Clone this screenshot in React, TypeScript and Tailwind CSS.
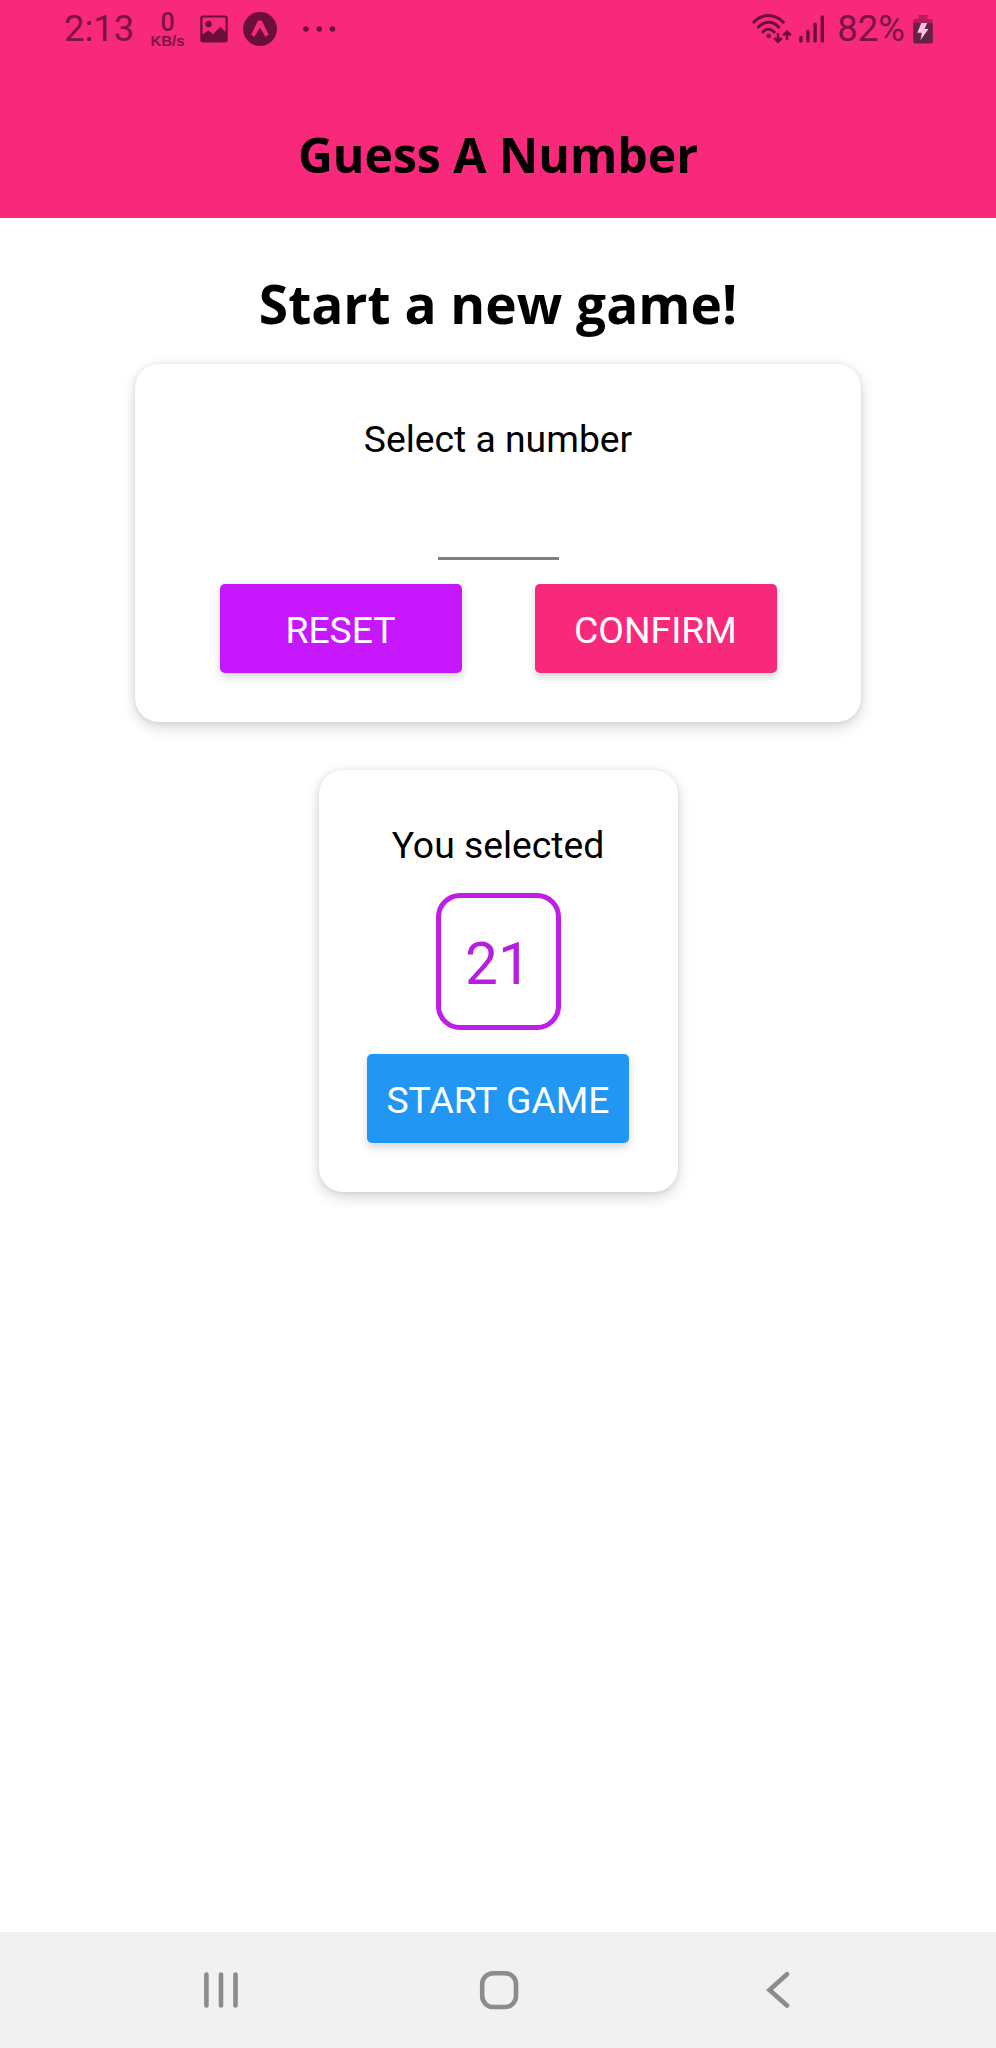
import type { ReactNode } from "react";

function ImageIcon() {
  return (
    <svg width="28" height="28" viewBox="0 0 28 28" className="ml-[16px]">
      <path
        fillRule="evenodd"
        fill="#6b0f38"
        d="M3 0.5H25a2.7 2.7 0 0 1 2.7 2.7V24.8a2.7 2.7 0 0 1-2.7 2.7H3a2.7 2.7 0 0 1-2.7-2.7V3.2A2.7 2.7 0 0 1 3 0.5ZM2.5 3V19.6L8.4 15.2L13 19.2L20.2 11.7L25.5 17V3a0.6 0.6 0 0 0-0.6-0.6H3.1A0.6 0.6 0 0 0 2.5 3Z"
      />
      <circle cx="8.5" cy="9" r="3.2" fill="#6b0f38" />
    </svg>
  );
}

function ExpoIcon() {
  return (
    <svg width="34" height="34" viewBox="0 0 34 34" className="ml-[15px]">
      <circle cx="17" cy="17" r="17" fill="#6b0f38" />
      <path
        fill="#f8287b"
        d="M15 8.500H18.800L25.600 22.600L22.500 25L17 15.500L11.200 25L8.200 22.600Z"
      />
    </svg>
  );
}

function MoreIcon() {
  return (
    <svg width="34" height="8" viewBox="0 0 34 8" className="ml-[25px]">
      <g fill="#6b0f38">
        <circle cx="4" cy="4" r="2.8" />
        <circle cx="17.3" cy="4" r="2.8" />
        <circle cx="30.4" cy="4" r="2.8" />
      </g>
    </svg>
  );
}

function WifiIcon() {
  return (
    <svg width="40" height="30" viewBox="0 0 40 30">
      <g fill="none" stroke="#6b0f38" strokeWidth="2.9" strokeLinecap="round">
        <path d="M1.800 8.200C10.500-0.800 22.500-0.800 31.300 8.200" />
        <path d="M6.300 13.200C12.600 6.600 20.600 6.600 26.800 13.200" />
        <path d="M10.900 18C14.600 14.200 18.400 14.200 22.200 18" />
      </g>
      <circle cx="16.7" cy="22" r="2.3" fill="#6b0f38" />
      <g fill="none" stroke="#6b0f38" strokeWidth="2.5">
        <path d="M26 19V27.500M22.300 24L26 27.700L29.700 24" />
        <path d="M35 26V17.500M31.300 21.300L35 17.600L38.700 21.300" />
      </g>
    </svg>
  );
}

function SignalIcon() {
  return (
    <svg width="26" height="28" viewBox="0 0 26 28" className="ml-[7px]">
      <path
        d="M1.900 22.500V26M8.900 16.200V26M16.100 9.200V26M23.300 2V26"
        fill="none"
        stroke="#6b0f38"
        strokeWidth="3.4"
        strokeLinecap="round"
      />
    </svg>
  );
}

function BatteryIcon() {
  return (
    <svg width="20" height="30" viewBox="0 0 20 30" className="ml-[8px]">
      <path fill="#b71b5b" d="M5.5 1H14.5V5H18a1.8 1.8 0 0 1 1.8 1.8V9H0.2V6.8A1.8 1.8 0 0 1 2 5H5.5Z" />
      <path fill="#642244" d="M0.2 9H19.8V27.6A1.8 1.8 0 0 1 18 29.4H2A1.8 1.8 0 0 1 0.2 27.6Z" />
      <path fill="#ffc4e0" d="M8.3 9H14.2L11.5 15H15.5L7.5 26L8.8 18.7H4.3Z" />
    </svg>
  );
}

function StatusBar() {
  return (
    <div className="flex h-[57px] items-center pl-[64px] pr-[63px] font-[Roboto,sans-serif] text-[#7b1443]">
      <span className="w-[87px] pt-px text-[36.5px] leading-[40px]">2:13</span>
      <span className="flex w-[33px] flex-col items-center pt-[3px] font-['Liberation_Sans',sans-serif] font-bold">
        <span className="font-[Roboto,sans-serif] text-[25px] font-medium leading-[20px]">0</span>
        <span className="text-[15px] leading-[15px]">KB/s</span>
      </span>
      <ImageIcon />
      <ExpoIcon />
      <MoreIcon />
      <span className="flex-1" />
      <WifiIcon />
      <SignalIcon />
      <span className="ml-[12px] pt-px text-[36.5px] leading-[40px]">82%</span>
      <BatteryIcon />
    </div>
  );
}

function Card({ className, children }: { className: string; children: ReactNode }) {
  return (
    <section
      className={`flex flex-col items-center rounded-[24px] bg-white shadow-[0_5px_14px_rgba(0,0,0,0.17),0_0_5px_rgba(0,0,0,0.08)] ${className}`}
    >
      {children}
    </section>
  );
}

function Button({ className, children }: { className: string; children: ReactNode }) {
  return (
    <button
      className={`h-[89px] rounded-[5px] pt-[3px] text-[37.3px] leading-[44px] text-white shadow-[0_4px_8px_rgba(0,0,0,0.17)] ${className}`}
    >
      {children}
    </button>
  );
}

export default function App() {
  return (
    <div className="flex h-[2048px] w-[996px] flex-col bg-white font-[Roboto,sans-serif] text-black">
      <header className="h-[218px] bg-[#f8287b]">
        <StatusBar />
        <h1 className="pt-[67px] text-center font-['Open_Sans',sans-serif] text-[48.2px] font-bold leading-[60px]">
          Guess A Number
        </h1>
      </header>
      <main className="flex flex-1 flex-col items-center pt-[51px]">
        <h2 className="font-['Open_Sans',sans-serif] text-[53.2px] font-bold leading-[70px]">
          Start a new game!
        </h2>
        <Card className="mt-[25px] h-[358px] w-[726px] pt-[50px]">
          <p className="text-[37.3px] leading-[50px]">Select a number</p>
          <div className="h-[96px] w-[121px] border-b-[3px] border-[#808080]" />
          <div className="mt-[24px] flex gap-[73px]">
            <Button className="w-[242px] bg-[#c717fc]">RESET</Button>
            <Button className="w-[242px] bg-[#f8287b]">CONFIRM</Button>
          </div>
        </Card>
        <Card className="mt-[48px] h-[422px] w-[359px] pt-[50px]">
          <p className="text-[37.3px] leading-[50px]">You selected</p>
          <div className="mt-[23px] flex h-[137px] w-[125px] items-center justify-center rounded-[24px] border-[5px] border-[#be1ee8] pt-[5px] text-[58.6px] leading-[70px] text-[#b61ee0]">
            21
          </div>
          <Button className="mt-[24px] w-[262px] bg-[#2196f3]">START GAME</Button>
        </Card>
      </main>
      <nav className="flex h-[116px] items-center bg-[#f1f1f1] pl-[203px]">
        <svg width="36" height="38" viewBox="0 0 36 38">
          <path d="M3.4 3.5V34.5M18 3.5V34.5M32.5 3.5V34.5" stroke="#8c8c8c" strokeWidth="4.6" strokeLinecap="round" />
        </svg>
        <svg width="40" height="40" viewBox="0 0 40 40" className="ml-[240px]">
          <rect x="3.2" y="3.2" width="33.8" height="33.8" rx="11" fill="none" stroke="#8c8c8c" strokeWidth="4.6" />
        </svg>
        <svg width="24" height="38" viewBox="0 0 24 38" className="ml-[247px]">
          <path d="M21 3.3L3.5 19L21 34.5" fill="none" stroke="#8c8c8c" strokeWidth="4.6" strokeLinecap="round" />
        </svg>
      </nav>
    </div>
  );
}
